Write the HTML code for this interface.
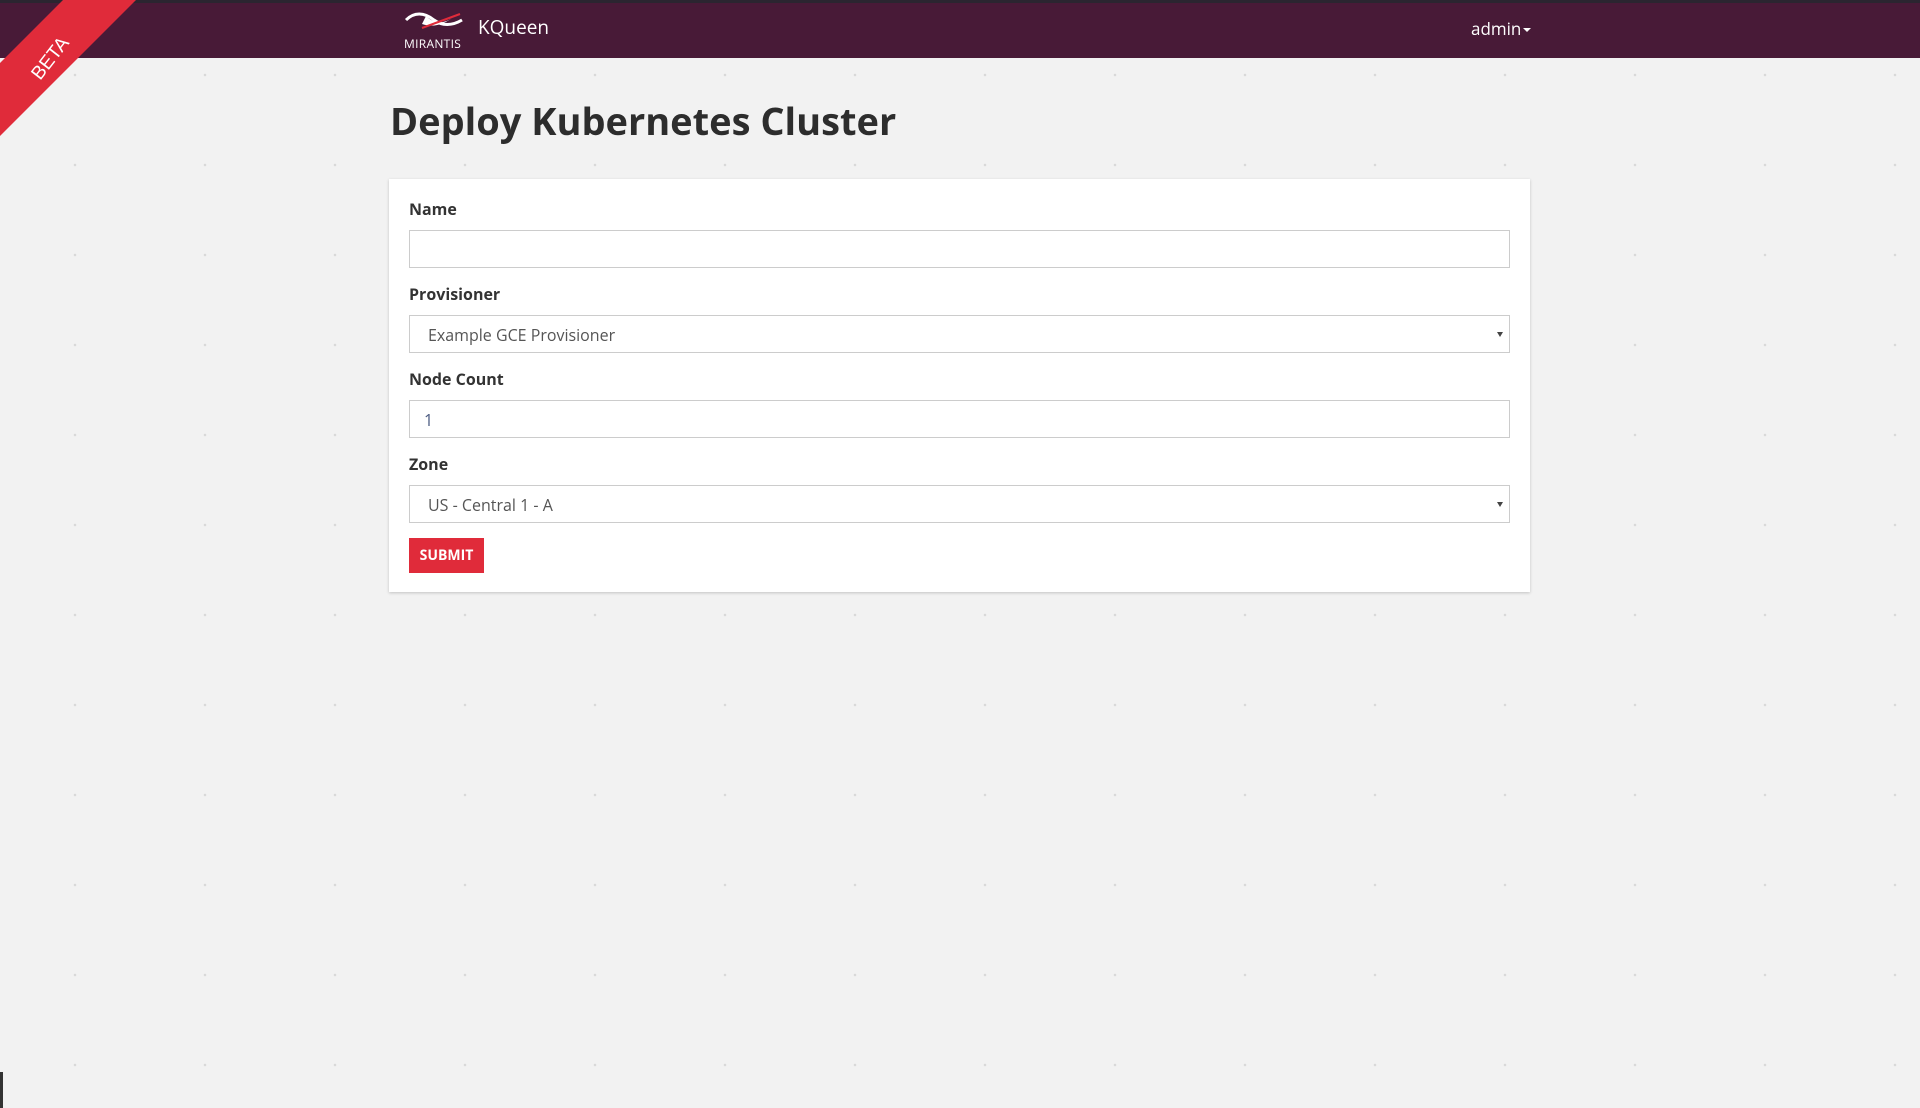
<!DOCTYPE html>
<html><head><meta charset="utf-8"><style>
*{box-sizing:border-box;margin:0;padding:0}
body{width:1920px;height:1108px;overflow:hidden;background:#f2f2f2;font-family:"Open Sans","Liberation Sans",sans-serif;position:relative;
background-image:radial-gradient(circle,#d8d8d8 1px,transparent 1.5px);background-size:130px 90px;background-position:10px 30px}
.top{position:absolute;left:0;top:0;width:1920px;height:3px;background:#2b2530}
.hdr{position:absolute;left:0;top:3px;width:1920px;height:55px;background:#481a37}
.kq{position:absolute;left:478px;top:14px;color:#fff;font-size:19px}
.mir{position:absolute;left:404px;top:35px;color:#fff;font-size:12px;letter-spacing:0.3px}
.admin{position:absolute;left:1471px;top:17px;color:#fff;font-size:17px}
.caret{display:inline-block;width:0;height:0;border-left:4px solid transparent;border-right:4px solid transparent;border-top:4px solid #fff;margin-left:2px;vertical-align:middle}
h1{position:absolute;left:390px;top:95px;font-size:38px;font-weight:bold;color:#2d2d2d;letter-spacing:0px}
.card{position:absolute;left:389px;top:179px;width:1141px;height:413px;background:#fff;box-shadow:0 1px 3px rgba(0,0,0,.2)}
.lbl{position:absolute;left:20px;font-size:16px;font-weight:bold;color:#333}
.inp{position:absolute;left:20px;width:1101px;height:38px;border:1px solid #ccc;background:#fff;font-size:16px;color:#555;padding:8px 18px}
.sel::after{content:"";position:absolute;right:6px;top:16px;border-left:3px solid transparent;border-right:3px solid transparent;border-top:5px solid #444}
.btn{position:absolute;left:20px;top:359px;width:75px;height:35px;background:#e02b3a;color:#fff;font-size:14px;font-weight:bold;text-align:center;line-height:35px}
</style></head><body>
<div class="top"></div>
<div class="hdr"></div>
<svg style="position:absolute;left:404px;top:10px" width="60" height="26" viewBox="0 0 60 26">
<path d="M2 10 C10 2 20 2 30 10 C38 16 48 16 58 10" stroke="#fff" stroke-width="3" fill="none"/>
<path d="M22 6 C30 14 40 14 48 8 C40 14 30 18 18 14 Z" fill="#fff"/>
<path d="M18 18 L56 4" stroke="#e02b3a" stroke-width="2"/>
</svg>
<div class="mir">MIRANTIS</div>
<div class="kq">KQueen</div>
<div class="admin">admin<span class="caret"></span></div>
<svg style="position:absolute;left:0;top:0" width="140" height="140"><polygon points="63,0 136,0 0,136 0,63" fill="#e02b3a"/>
<text x="0" y="0" transform="translate(55,62) rotate(-52)" fill="#fff" font-family="Liberation Sans,sans-serif" font-size="19" text-anchor="middle">BETA</text></svg>
<h1>Deploy Kubernetes Cluster</h1>
<div class="card">
<div class="lbl" style="top:19px">Name</div>
<div class="inp" style="top:51px"></div>
<div class="lbl" style="top:104px">Provisioner</div>
<div class="inp sel" style="top:136px">Example GCE Provisioner</div>
<div class="lbl" style="top:189px">Node Count</div>
<div class="inp" style="top:221px;padding-left:14px;color:#4a5a80">1</div>
<div class="lbl" style="top:274px">Zone</div>
<div class="inp sel" style="top:306px">US - Central 1 - A</div>
<div class="btn">SUBMIT</div>
</div>
<div style="position:absolute;left:0;top:1072px;width:3px;height:36px;background:#333"></div>
</body></html>
